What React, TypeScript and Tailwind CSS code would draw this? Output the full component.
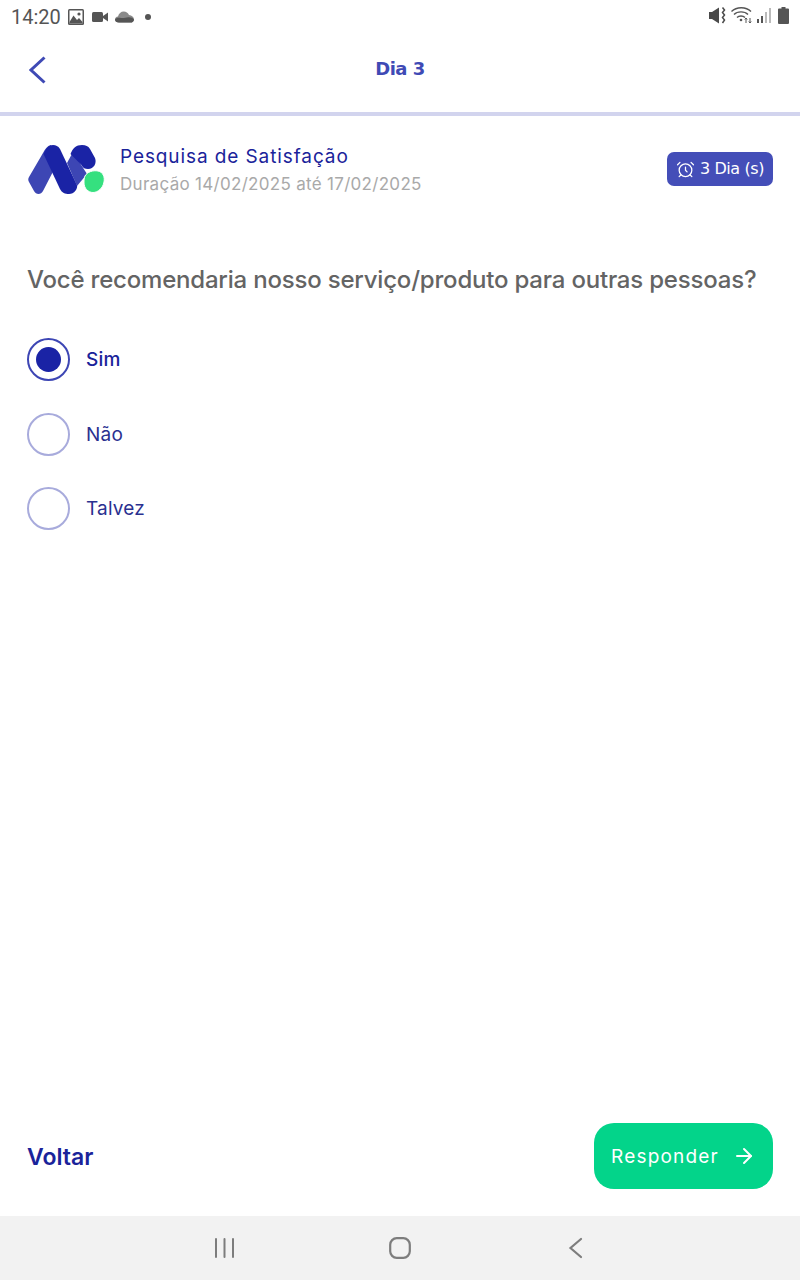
import React from 'react';
import { ArrowRight, AlarmClock } from 'lucide-react';

const sans = "font-['Inter','Liberation_Sans',sans-serif]";

const StatusBar = () => (
  <div className="h-[40px] flex items-start justify-between pl-[11px] pr-[11px] pt-[5px] bg-white">
    <div className="flex items-center h-[24px] text-[#555555]">
      <span className="font-['Roboto',sans-serif] text-[20px] leading-[24px] w-[57px]">14:20</span>
      <svg width="16" height="16" viewBox="0 0 16 16">
        <rect x="0" y="0" width="16" height="16" rx="1.5" fill="#555555" />
        <rect x="1.5" y="1.5" width="13" height="13" fill="#fff" />
        <circle cx="11" cy="5" r="1.6" fill="#555555" />
        <path d="M1.5 13 L5.5 6.5 L9 11 L11 9 L14.5 13 V14.5 H1.5 Z" fill="#555555" />
      </svg>
      <svg width="16" height="12" viewBox="0 0 16 12" className="ml-[8px]">
        <rect x="0" y="1" width="11" height="10" rx="1.5" fill="#555555" />
        <path d="M11 5 L16 1.5 V10.5 L11 7 Z" fill="#555555" />
      </svg>
      <svg width="19" height="12" viewBox="0 0 19 12" className="ml-[7px]">
        <path d="M4 11.5 C1.5 11.5 0 10.2 0 8.5 C0 7 1.2 5.8 3 5.6 C3.6 2.5 6 0.5 8.8 0.5 C11.2 0.5 13 1.8 14 4 C16.8 4.4 19 6 19 8.4 C19 10.4 17.4 11.5 15.4 11.5 Z" fill="#8a8a8a" />
        <path d="M0 8.5 C1 6.8 3.5 6.5 6 7 C9 7.5 11 6 14 6.2 C16 6.3 18 7 19 8.4 C19 10.4 17.4 11.5 15.4 11.5 H4 C1.5 11.5 0 10.2 0 8.5 Z" fill="#555555" />
      </svg>
      <span className="ml-[11px] w-[6px] h-[6px] rounded-full bg-[#555555]" />
    </div>
    <div className="flex items-center h-[20px]">
      <svg width="17" height="17" viewBox="0 0 17 17">
        <path d="M0 5 H3 L10 0.5 V16.5 L3 12 H0 Z" fill="#4a4a4a" />
        <path d="M13.5 0.5 L15.5 3 L13.5 5.5 L15.5 8 L13.5 10.5 L15.5 13 L13.5 16" stroke="#4a4a4a" strokeWidth="1.5" fill="none" />
      </svg>
      <svg width="22" height="17" viewBox="0 0 22 17" className="ml-[5px]">
        <path d="M0.5 4.5 C5.5 -0.5 15 -0.5 20 4.5 M3 7.5 C6.5 4 13.5 4 17 7.5 M6 10.5 C8 8.5 12 8.5 14 10.5" stroke="#555555" strokeWidth="1.4" fill="none" />
        <circle cx="10" cy="13" r="1.3" fill="#555555" />
        <path d="M15 16 V11 M13.8 12.5 L15 11 L16.2 12.5 M19 11 V16 M17.8 14.5 L19 16 L20.2 14.5" stroke="#555555" strokeWidth="1" fill="none" />
      </svg>
      <div className="flex items-end gap-[2px] h-[15px] ml-[4px]">
        <span className="w-[2px] h-[4px] bg-[#555555]" />
        <span className="w-[2px] h-[7px] bg-[#555555]" />
        <span className="w-[2px] h-[11px] bg-[#bbbbbb]" />
        <span className="w-[2px] h-[15px] bg-[#bbbbbb]" />
      </div>
      <svg width="11" height="17" viewBox="0 0 11 17" className="ml-[7px]">
        <path d="M3.5 0 H7.5 V1.5 H10 Q11 1.5 11 2.5 V16 Q11 17 10 17 H1 Q0 17 0 16 V2.5 Q0 1.5 1 1.5 H3.5 Z" fill="#555555" />
      </svg>
    </div>
  </div>
);

const Logo = () => (
  <svg width="80" height="52" viewBox="0 0 80 52" className="shrink-0">
    {/* left leg */}
    <path d="M2 33 L16 9 C18 5 20 2 24 1 L32 16 L16 47 C14 51 9 51 7 47 L2 38 C1 36 1 35 2 33 Z" fill="#3d46b4" />
    {/* middle stroke */}
    <path d="M16.5 10 C19 4 22 1 26 1 C29 1 31 2 33 5 L50 41 C51 45 47 50 42 50 C38 50 35 49 33 45 Z" fill="#1a23a5" />
    {/* second light stroke */}
    <path d="M40 19 L46 8 L60 30 L50 42 Z" fill="#3d46b4" />
    {/* right cap */}
    <path d="M43.5 10 C46 4 49 1 55 1 C59 1 61 2 63 5 L68 14 C70 19 67 25 61 25 C58 25 56 24 54.5 21 Z" fill="#1a23a5" />
    {/* green dot */}
    <path d="M58 32 C60 28 66 26 71 27 C76 28 78 33 77 38 C76 44 71 48.5 66 48.5 C61 48.5 57 44 57 39 C57 36 57 34 58 32 Z" fill="#35e07f" stroke="#ffffff" strokeWidth="1" />
  </svg>
);

const Option = ({ label, selected }: { label: string; selected?: boolean }) => (
  <div className={`flex items-center gap-[16px] ${selected ? 'h-[43px]' : 'h-[42px]'}`}>
    <div className={`w-[43px] h-[43px] rounded-full border-2 flex items-center justify-center ${selected ? 'border-[#3d46b4]' : 'border-[#a8abdc]'}`}>
      {selected && <div className="w-[25px] h-[25px] rounded-full bg-[#1a23a5]" />}
    </div>
    <span className={`text-[19px] leading-[24px] tracking-[0.2px] ${selected ? 'font-medium text-[#1a239a]' : 'pt-[2px] text-[#2a3190]'}`}>{label}</span>
  </div>
);

export default function App() {
  return (
    <div className={`w-[800px] h-[1280px] bg-white flex flex-col ${sans}`}>
      <StatusBar />

      <div className="h-[76px] flex items-center relative border-b-[4px] border-[#d2d4ee] pb-[8px]">
        <button className="ml-[29px] text-[#3f4ab5]">
          <svg width="18" height="28" viewBox="0 0 18 28" className="-mt-[5px]">
            <path d="M15.5 1.5 L2 14 L15.5 26.5" stroke="#3f4ab5" strokeWidth="3" fill="none" />
          </svg>
        </button>
        <span className="absolute left-0 right-0 top-[17px] text-center text-[18px] leading-[24px] font-semibold text-[#3f4ab5] font-['DejaVu_Sans',sans-serif] tracking-[-0.5px] pointer-events-none">
          Dia 3
        </span>
      </div>

      <div className="flex items-center pl-[27px] pr-[27px] mt-[24px] h-[60px]">
        <Logo />
        <div className="ml-[13px] flex-1">
          <div className="text-[19px] leading-[26px] text-[#1a239a] tracking-[0.9px]">Pesquisa de Satisfação</div>
          <div className="text-[17px] leading-[26px] text-[#a9a9a9] mt-[1px] tracking-[0.3px]">Duração 14/02/2025 até 17/02/2025</div>
        </div>
        <div className="h-[34px] w-[106px] rounded-[7px] bg-[#444eb8] text-white flex items-center justify-center gap-[5px] -mt-[2px]">
          <AlarmClock size={19} strokeWidth={1.6} />
          <span className="text-[16px] leading-[20px] font-['DejaVu_Sans',sans-serif] tracking-[-0.4px] whitespace-nowrap">3 Dia (s)</span>
        </div>
      </div>

      <div className="mt-[64px] pl-[27px] text-[24px] leading-[32px] font-medium text-[#646464] tracking-[-0.2px] whitespace-nowrap">
        Você recomendaria nosso serviço/produto para outras pessoas?
      </div>

      <div className="mt-[42px] pl-[27px] flex flex-col gap-[32px]">
        <Option label="Sim" selected />
        <Option label="Não" />
        <Option label="Talvez" />
      </div>

      <div className="flex-1" />

      <div className="flex items-center justify-between pl-[27px] pr-[27px] pb-[27px]">
        <span className="text-[23px] leading-[32px] font-semibold text-[#1a239a] pt-[2px]">Voltar</span>
        <button className="w-[179px] h-[66px] rounded-[20px] bg-[#03d48a] text-white flex items-center justify-center gap-[13px]">
          <span className="text-[19px] leading-[24px] tracking-[1.2px] pt-[1px]">Responder</span>
          <ArrowRight size={24} strokeWidth={2} />
        </button>
      </div>

      <div className="h-[64px] bg-[#f2f2f2] flex items-center pl-[214px]">
        <svg width="22" height="20" viewBox="0 0 22 20">
          <path d="M2 1 V19 M10.5 1 V19 M19 1 V19" stroke="#7d7d7d" strokeWidth="2" strokeLinecap="round" />
        </svg>
        <svg width="22" height="22" viewBox="0 0 22 22" className="ml-[153px]">
          <rect x="1.2" y="1.2" width="19.6" height="19.6" rx="6.5" stroke="#7d7d7d" strokeWidth="2.2" fill="none" />
        </svg>
        <svg width="16" height="22" viewBox="0 0 16 22" className="ml-[157px]">
          <path d="M13 2 L2.5 11 L13 20" stroke="#7d7d7d" strokeWidth="2.2" fill="none" strokeLinecap="round" />
        </svg>
      </div>
    </div>
  );
}
